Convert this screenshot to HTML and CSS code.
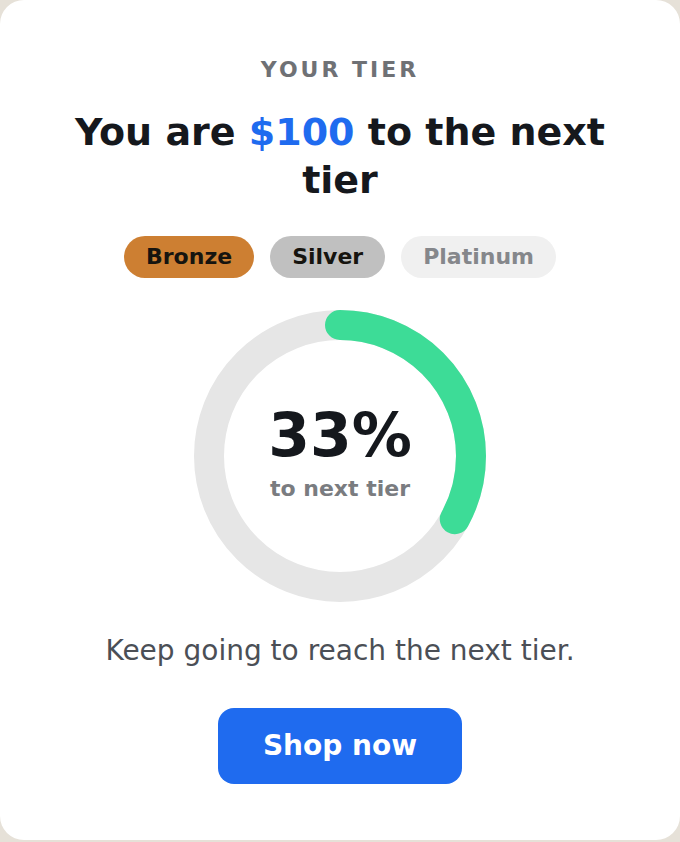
FILE: index.html
```html
<!DOCTYPE html>
<html lang="en">
<head>
    <meta charset="UTF-8">
    <meta name="viewport" content="width=device-width, initial-scale=1.0">
    <title>Your Tier</title>
    <link rel="stylesheet" href="styles.css">
</head>
<body>
<div class="card">
    <div class="eyebrow">YOUR TIER</div>
    <h1 class="headline">You are <span class="amount">$100</span> to the next tier</h1>

    <div class="tiers">
        <span class="tier tier-bronze">Bronze</span>
        <span class="tier tier-silver">Silver</span>
        <span class="tier tier-platinum">Platinum</span>
    </div>

    <div class="ring">
        <svg width="292" height="292" viewBox="0 0 292 292">
            <circle cx="146" cy="146" r="131" fill="none" stroke="#e6e6e6" stroke-width="30"/>
            <circle cx="146" cy="146" r="131" fill="none" stroke="#3ddc97" stroke-width="30"
                    stroke-linecap="round" stroke-dasharray="271.6 1000"
                    transform="rotate(-90 146 146)"/>
        </svg>
        <div class="ring-label">
            <div class="ring-value">33%</div>
            <div class="ring-caption">to next tier</div>
        </div>
    </div>

    <p class="note">Keep going to reach the next tier.</p>

    <button class="shop">Shop now</button>
</div>
</body>
</html>
```

FILE: styles.css
```css
body {
    margin: 0;
    background-color: #e6e1d8;
    font-family: "DejaVu Sans", Verdana, sans-serif;
}

.card {
    width: 680px;
    height: 840px;
    box-sizing: border-box;
    background-color: #fff;
    border-radius: 24px;
    padding-top: 57px;
    display: flex;
    flex-direction: column;
    align-items: center;
    text-align: center;
}

.eyebrow {
    font-size: 22px;
    font-weight: bold;
    letter-spacing: 3px;
    color: #6f7175;
    line-height: 26px;
}

.headline {
    margin: 25px 0 0;
    font-size: 38px;
    line-height: 48px;
    color: #15181d;
    max-width: 580px;
}

.amount {
    color: #1f6bef;
}

.tiers {
    display: flex;
    gap: 16px;
    margin-top: 32px;
}

.tier {
    height: 42px;
    line-height: 42px;
    padding: 0 22px;
    border-radius: 21px;
    font-size: 22px;
    font-weight: bold;
}

.tier-bronze {
    background-color: #cd7f32;
    color: #16140f;
}

.tier-silver {
    background-color: #c0c0c0;
    color: #16140f;
}

.tier-platinum {
    background-color: #f0f0f0;
    color: #85878b;
}

.ring {
    position: relative;
    width: 292px;
    height: 292px;
    margin-top: 32px;
}

.ring svg {
    display: block;
}

.ring-label {
    position: absolute;
    inset: 0 0 8px 0;
    display: flex;
    flex-direction: column;
    align-items: center;
    justify-content: center;
}

.ring-value {
    font-size: 60px;
    font-weight: bold;
    line-height: 66px;
    color: #15181d;
}

.ring-caption {
    margin-top: 8px;
    font-size: 22px;
    font-weight: bold;
    color: #7a7c80;
    line-height: 26px;
}

.note {
    margin: 31px 0 0;
    font-size: 28px;
    line-height: 36px;
    color: #4b4f56;
}

.shop {
    margin-top: 39px;
    width: 244px;
    height: 76px;
    padding-bottom: 2px;
    border: none;
    border-radius: 16px;
    background-color: #1f6bef;
    color: #fff;
    font-family: inherit;
    font-size: 28px;
    font-weight: bold;
}
```
